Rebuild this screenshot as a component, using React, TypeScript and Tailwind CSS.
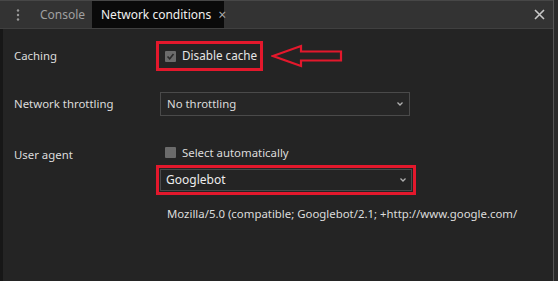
import React from "react";

const font = { fontFamily: '"Noto Sans", "Open Sans", sans-serif' };

function Check({ checked }: { checked: boolean }) {
  return (
    <span className="w-[11px] h-[11px] shrink-0 bg-[#6b6b6b] rounded-[1px] flex items-center justify-center">
      {checked && (
        <svg width="9" height="9" viewBox="0 0 9 9">
          <path d="M1.5 4.5 L3.7 6.8 L7.5 2" stroke="#2a2a2a" strokeWidth="1.6" fill="none" />
        </svg>
      )}
    </span>
  );
}

function Chevron() {
  return (
    <svg width="8" height="6" viewBox="0 0 8 6">
      <path d="M1.5 1.5 L4 4 L6.5 1.5" stroke="#b0b0b0" strokeWidth="1.3" fill="none" />
    </svg>
  );
}

export default function App() {
  return (
    <div className="w-[558px] h-[281px] bg-[#242424] flex text-[11.4px] overflow-hidden whitespace-nowrap" style={font}>
      <div className="w-[553px] flex flex-col">
        <div className="h-[29px] bg-[#333333] border-t border-t-[#474747] border-b border-b-[#404040] flex items-stretch">
          <div className="w-[36px] flex items-center justify-center">
            <svg width="4" height="12" viewBox="0 0 4 12">
              <circle cx="2" cy="1.5" r="1.2" fill="#9a9a9a" />
              <circle cx="2" cy="6" r="1.2" fill="#9a9a9a" />
              <circle cx="2" cy="10.5" r="1.2" fill="#9a9a9a" />
            </svg>
          </div>
          <div className="w-[56px] flex items-center pl-[4px] text-[#a0a0a0] text-[12px]">Console</div>
          <div className="w-[132px] bg-[#0a0a0a] flex items-center pl-[9px] text-[#f0f0f0] text-[12px]">
            <span>Network conditions</span>
            <span className="ml-[7px] text-[#a8a8a8] text-[14px] leading-none">×</span>
          </div>
          <div className="flex-1" />
          <div className="w-[28px] flex items-center justify-center">
            <svg width="11" height="11" viewBox="0 0 11 11">
              <path d="M1 1 L10 10 M10 1 L1 10" stroke="#c8c8c8" strokeWidth="1.6" />
            </svg>
          </div>
        </div>
        <div className="flex-1 flex">
          <div className="w-[3px] bg-[#171717]" />
          <div className="flex-1 relative text-[#dcdcdc]">
            <div className="flex flex-col pl-[11px] pt-[12px]">
              <div className="flex h-[30px] items-center">
                <div className="w-[142px]">Caching</div>
                <div className="h-[30px] w-[107px] border-[3px] border-[#e3182c] flex items-center pl-[6px] gap-[6px]">
                  <Check checked />
                  <span className="text-[#e6e6e6] text-[11.7px]">Disable cache</span>
                </div>
                <svg width="72" height="24" viewBox="0 0 72 24" className="ml-[8px]">
                  <path d="M2 12 L30 2 L30 7.5 L70 7.5 L70 16.5 L30 16.5 L30 22 Z" stroke="#e3182c" strokeWidth="2.2" fill="none" strokeLinejoin="miter" />
                </svg>
              </div>
              <div className="flex items-center mt-[21px] h-[24px]">
                <div className="w-[146px]">Network throttling</div>
                <div className="w-[250px] h-[24px] border border-[#4a4a4a] bg-[#262626] flex items-center justify-between pl-[6px] pr-[5px]">
                  <span>No throttling</span>
                  <Chevron />
                </div>
              </div>
              <div className="flex items-center mt-[25px] h-[24px]">
                <div className="w-[146px] mt-[4px]">User agent</div>
                <div className="flex items-center pl-[5px] gap-[6px]">
                  <Check checked={false} />
                  <span>Select automatically</span>
                </div>
              </div>
              <div className="flex ml-[142px]">
                <div className="w-[260px] h-[30px] border-[3px] border-[#e3182c] p-[1px]">
                  <div className="w-full h-full border border-[#4a4a4a] flex items-center justify-between pl-[5px] pr-[4px]">
                    <span className="text-[#ececec] text-[12px]">Googlebot</span>
                    <Chevron />
                  </div>
                </div>
              </div>
              <div className="ml-[153px] mt-[10px] text-[#dcdcdc]">
                Mozilla/5.0 (compatible; Googlebot/2.1; +http://www.google.com/
              </div>
            </div>
          </div>
        </div>
      </div>
      <div className="w-[1px] bg-[#555555]" />
      <div className="flex-1 bg-[#2a2a2a]" />
    </div>
  );
}
